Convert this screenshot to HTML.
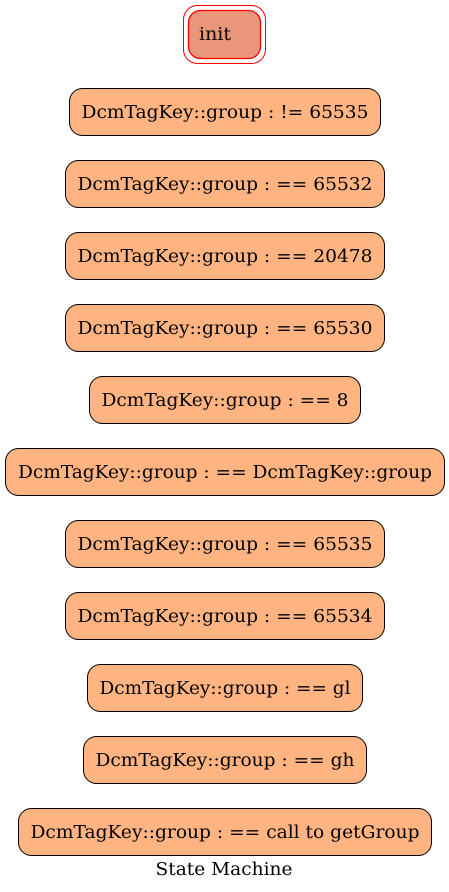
<!DOCTYPE html>
<html><head><meta charset="utf-8"><style>html,body{margin:0;padding:0;background:#fff}svg{display:block}text{font-family:"DejaVu Serif",serif;font-size:17.5px}</style></head><body>
<svg width="449" height="892" viewBox="0 0 449 892" xmlns="http://www.w3.org/2000/svg">
<rect x="183.5" y="5.5" width="82" height="58" rx="14" fill="none" stroke="#ff0000" stroke-width="1"/>
<rect x="188.5" y="10.5" width="72" height="48" rx="12" fill="#e9967a" stroke="#ff0000" stroke-width="1.3"/>
<text x="199" y="40" textLength="32" lengthAdjust="spacingAndGlyphs">init</text>
<g fill="#ffb481" stroke="#000" stroke-width="1">
<rect x="69.5" y="88.5" width="311" height="47" rx="13"/>
<rect x="65.5" y="160.5" width="319" height="47" rx="13"/>
<rect x="65.5" y="232.5" width="319" height="47" rx="13"/>
<rect x="65.5" y="304.5" width="319" height="47" rx="13"/>
<rect x="89.5" y="376.5" width="271" height="47" rx="13"/>
<rect x="5.5" y="448.5" width="439" height="47" rx="13"/>
<rect x="65.5" y="520.5" width="319" height="47" rx="13"/>
<rect x="65.5" y="592.5" width="319" height="47" rx="13"/>
<rect x="87.5" y="664.5" width="275" height="47" rx="13"/>
<rect x="83.5" y="736.5" width="283" height="47" rx="13"/>
<rect x="18.5" y="808.5" width="413" height="47" rx="13"/>
</g>
<g text-anchor="middle" fill="#000">
<text x="225" y="118" textLength="287" lengthAdjust="spacingAndGlyphs">DcmTagKey::group : != 65535</text>
<text x="225" y="190" textLength="295" lengthAdjust="spacingAndGlyphs">DcmTagKey::group : == 65532</text>
<text x="225" y="262" textLength="295" lengthAdjust="spacingAndGlyphs">DcmTagKey::group : == 20478</text>
<text x="225" y="334" textLength="295" lengthAdjust="spacingAndGlyphs">DcmTagKey::group : == 65530</text>
<text x="225" y="406" textLength="247" lengthAdjust="spacingAndGlyphs">DcmTagKey::group : == 8</text>
<text x="225" y="478" textLength="414" lengthAdjust="spacingAndGlyphs">DcmTagKey::group : == DcmTagKey::group</text>
<text x="225" y="550" textLength="295" lengthAdjust="spacingAndGlyphs">DcmTagKey::group : == 65535</text>
<text x="225" y="622" textLength="295" lengthAdjust="spacingAndGlyphs">DcmTagKey::group : == 65534</text>
<text x="225" y="694" textLength="251" lengthAdjust="spacingAndGlyphs">DcmTagKey::group : == gl</text>
<text x="225" y="766" textLength="259" lengthAdjust="spacingAndGlyphs">DcmTagKey::group : == gh</text>
<text x="225" y="838" textLength="389" lengthAdjust="spacingAndGlyphs">DcmTagKey::group : == call to getGroup</text>
<text x="224" y="875" textLength="137" lengthAdjust="spacingAndGlyphs">State Machine</text>
</g>
</svg>
</body></html>
